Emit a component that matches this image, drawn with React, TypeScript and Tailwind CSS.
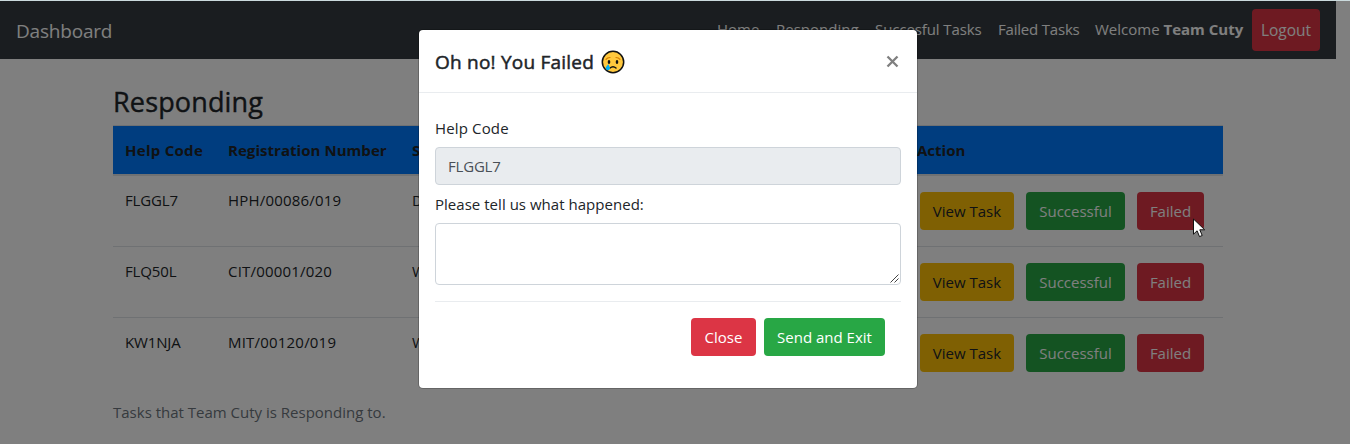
const rows = [
  { code: "FLGGL7", reg: "HPH/00086/019", s: "D" },
  { code: "FLQ50L", reg: "CIT/00001/020", s: "W" },
  { code: "KW1NJA", reg: "MIT/00120/019", s: "W" },
];

const btn = "flex h-[38px] items-center justify-center rounded whitespace-nowrap";

function CryingFace() {
  return (
    <svg className="h-6 w-6" viewBox="0 0 24 24">
      <circle cx="12" cy="12" r="10.7" fill="#ffc83d" stroke="#111" strokeWidth="1.5" />
      <path d="M5 9.4Q6.4 7.6 9 7.5M15 7.5Q17.6 7.6 19 9.4" fill="none" stroke="#d67d00" strokeWidth="1.2" strokeLinecap="round" />
      <ellipse cx="8" cy="12" rx="1.3" ry="1.9" fill="#111" />
      <ellipse cx="16" cy="12" rx="1.3" ry="1.9" fill="#111" />
      <path d="M9 18Q12 15.4 15 18" fill="none" stroke="#111" strokeWidth="1.5" strokeLinecap="round" />
      <path d="M7.2 14.2C5.7 15.8 4.7 17.2 4.7 18.3a2.2 2.2 0 0 0 4.3.3C9.2 17.3 8 15.7 7.2 14.2Z" fill="#00b1f5" />
    </svg>
  );
}

function Navbar() {
  return (
    <nav className="flex h-[58px] w-[1336px] items-start bg-[#343a40] text-white">
      <div className="ml-4 mt-[15px] text-[19px] leading-[30px] tracking-[-0.2px]">Dashboard</div>
      <div className="ml-auto mr-4 flex items-start pt-2 whitespace-nowrap">
        <div className="flex leading-[40px]">
          <span className="w-[59px]">Home</span>
          <span className="w-[99px]">Responding</span>
          <span className="w-[123px] tracking-[-0.1px]">Succesful Tasks</span>
          <span className="w-[97px] tracking-[-0.2px]">Failed Tasks</span>
          <span className="w-[157px]">Welcome <b>Team Cuty</b></span>
        </div>
        <button className="h-[42px] w-[68px] rounded bg-[#dc3545] pt-[2px] text-[15.5px]">Logout</button>
      </div>
    </nav>
  );
}

function TaskTable() {
  return (
    <div className="w-[1110px]">
      <div className="flex h-[51px] border-t border-b-2 border-[#dee2e6] bg-[#007bff] bg-clip-padding px-3 pt-3 leading-6 font-bold">
        <span className="w-[103px] tracking-[0.28px]">Help Code</span>
        <span className="w-[184px] tracking-[0.05px]">Registration Number</span>
        <span className="w-[505px]">S</span>
        <span>Action</span>
      </div>
      {rows.map((r, i) => (
        <div key={r.code} className={i === 0 ? "flex h-[70px] px-3" : "flex h-[71px] border-t border-[#dee2e6] px-3"}>
          <span className="w-[103px] pt-3 leading-6 tracking-[-0.15px]">{r.code}</span>
          <span className="w-[184px] pt-3 leading-6 tracking-[0.2px]">{r.reg}</span>
          <span className="w-[508px] pt-3 leading-6">{r.s}</span>
          <div className="flex gap-3 pt-4">
            <button className={`${btn} w-[94px] bg-[#ffc107]`}>View Task</button>
            <button className={`${btn} w-[99px] bg-[#28a745] text-white`}>Successful</button>
            <button className={`${btn} w-[67px] bg-[#dc3545] text-white`}>Failed</button>
          </div>
        </div>
      ))}
      <p className="mt-3 leading-6 text-[#6c757d]">Tasks that Team Cuty is Responding to.</p>
    </div>
  );
}

function FailedModal() {
  return (
    <div className="absolute left-[419px] top-[30px] flex h-[358px] w-[498px] flex-col rounded bg-white shadow-[0_0_0_1px_rgba(0,0,0,0.2)]">
      <header className="flex h-[63px] shrink-0 items-center border-b border-[#e9ecef] px-4 pt-px">
        <h5 className="w-[166px] pt-px text-[19px] font-medium tracking-[0.22px] whitespace-nowrap [-webkit-text-stroke:0.5px_#212529]">Oh no! You Failed</h5>
        <CryingFace />
        <button className="ml-auto -mt-px flex w-[17px] items-center justify-center">
          <svg className="h-[13px] w-[13px]" viewBox="0 0 13 13">
            <path d="M1.5 1.5 11.5 11.5M11.5 1.5 1.5 11.5" stroke="#7f7f7f" strokeWidth="2.3" />
          </svg>
        </button>
      </header>
      <div className="flex flex-col px-4 pt-[23px]">
        <label className="leading-6 tracking-[0.15px]">Help Code</label>
        <div className="mt-[7px] h-[38px] rounded border border-[#ced4da] bg-[#e9ecef] px-3 leading-9 tracking-[-0.2px] text-[#495057]">FLGGL7</div>
        <label className="mt-[7px] leading-6 tracking-[0.03px]">Please tell us what happened:</label>
        <textarea className="mt-[7px] block h-[62px] w-full resize-none rounded border border-[#ced4da] bg-white" />
        <div className="flex h-0 justify-end">
          <svg className="-mt-[11px] mr-[1px] h-[10px] w-[10px] shrink-0" viewBox="0 0 10 10">
            <path d="M.5 8.5 8.5.5M4.5 8.5 8.5 4.5" stroke="#444" strokeWidth="1" />
          </svg>
        </div>
        <div className="mt-4 flex justify-end gap-2 border-t border-[#e9ecef] px-4 pt-4 text-white">
          <button className={`${btn} w-[65px] bg-[#dc3545]`}>Close</button>
          <button className={`${btn} w-[121px] bg-[#28a745]`}>Send and Exit</button>
        </div>
      </div>
    </div>
  );
}

export default function App() {
  return (
    <div className="relative h-[444px] w-[1350px] overflow-hidden bg-white pt-px font-['Open_Sans','Noto_Sans',sans-serif] text-[15px] text-[#212529]">
      <Navbar />
      <main className="ml-[113px] pt-[25px]">
        <h3 className="h-[41px] pt-px text-[27px] leading-[34px] font-medium tracking-[0.15px] [-webkit-text-stroke:0.4px_#212529]">Responding</h3>
        <TaskTable />
      </main>
      <div className="absolute inset-0 border-t border-[#cbdadd] bg-black/50 bg-clip-padding" />
      <FailedModal />
      <svg className="absolute left-[1193px] top-[218px] h-[20px] w-[13px]" viewBox="0 0 13 20">
        <path d="M.5 1V16.2L4.1 12.8 6.5 18.6 9.2 17.5 6.8 11.8H11.7Z" fill="white" stroke="#111" />
      </svg>
    </div>
  );
}
